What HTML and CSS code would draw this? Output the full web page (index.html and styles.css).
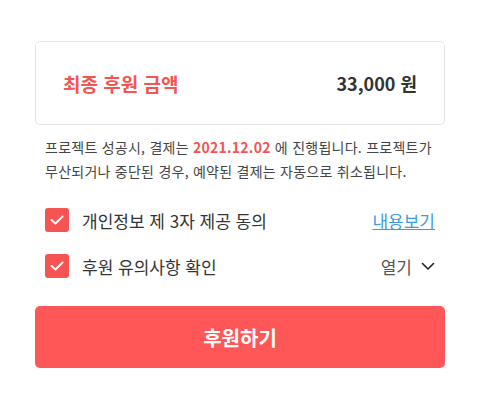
FILE: index.html
```html
<!DOCTYPE html>
<html lang="ko">
<head>
<meta charset="UTF-8" />
<meta name="viewport" content="width=device-width, initial-scale=1" />
<title>후원하기</title>
<link rel="stylesheet" href="styles.css">
</head>
<body>
  <div class="checkout">
    <div class="total-card">
      <span class="total-label">최종 후원 금액</span>
      <span class="total-amount">33,000 원</span>
    </div>

    <p class="notice">
      프로젝트 성공시, 결제는 <strong class="date">2021.12.02</strong> 에 진행됩니다. 프로젝트가<br>
      무산되거나 중단된 경우, 예약된 결제는 자동으로 취소됩니다.
    </p>

    <div class="agree-list">
      <label class="agree-row">
        <span class="check">
          <svg width="14" height="10" viewBox="0 0 14 10"><path d="M1.5 5l4 3.5 7-7" fill="none" stroke="#fff" stroke-width="2" stroke-linecap="round" stroke-linejoin="round"/></svg>
        </span>
        <span class="agree-text">개인정보 제 3자 제공 동의</span>
        <a class="agree-link" href="#">내용보기</a>
      </label>
      <label class="agree-row">
        <span class="check">
          <svg width="14" height="10" viewBox="0 0 14 10"><path d="M1.5 5l4 3.5 7-7" fill="none" stroke="#fff" stroke-width="2" stroke-linecap="round" stroke-linejoin="round"/></svg>
        </span>
        <span class="agree-text">후원 유의사항 확인</span>
        <span class="agree-toggle">열기
          <svg width="14" height="9" viewBox="0 0 14 9"><path d="M1.5 1.5l5.5 5.5 5.5-5.5" fill="none" stroke="#222" stroke-width="1.6" stroke-linecap="round" stroke-linejoin="round"/></svg>
        </span>
      </label>
    </div>

    <button class="submit-btn">후원하기</button>
  </div>
</body>
</html>
```

FILE: styles.css
```css
body {
  margin: 0;
  background: #fff;
  font-family: 'Noto Sans CJK KR', 'Noto Sans', sans-serif;
  color: #333;
}

.checkout {
  width: 410px;
  padding: 41px 0 0 35px;
}

/* Total card */
.total-card {
  display: flex;
  justify-content: space-between;
  align-items: center;
  height: 82px;
  padding: 0 27px;
  border: 1px solid #e4e4e4;
  border-radius: 5px;
}

.total-label {
  font-size: 19px;
  font-weight: 700;
  color: #f45452;
}

.total-amount {
  font-size: 18px;
  font-weight: 700;
  color: #333;
}

/* Notice */
.notice {
  margin: 10px 0 0;
  padding: 0 10px;
  font-size: 14px;
  line-height: 24px;
  letter-spacing: 0.25px;
  color: #444;
  white-space: nowrap;
}

.notice .date {
  color: #f45452;
  font-weight: 700;
}

/* Agreements */
.agree-list {
  display: flex;
  flex-direction: column;
  gap: 22px;
  margin-top: 25px;
  padding: 0 10px;
}

.agree-row {
  display: flex;
  align-items: center;
  height: 24px;
}

.check {
  display: flex;
  align-items: center;
  justify-content: center;
  width: 24px;
  height: 24px;
  border-radius: 3px;
  background: #f55452;
}

.agree-text {
  flex: 1;
  margin-left: 13px;
  font-size: 17px;
  color: #333;
}

.agree-link {
  font-size: 17px;
  color: #3c9be0;
  text-decoration: underline;
}

.agree-toggle {
  display: flex;
  align-items: center;
  gap: 9px;
  font-size: 17px;
  color: #555;
}

/* Submit */
.submit-btn {
  display: block;
  width: 100%;
  height: 62px;
  margin-top: 28px;
  border: none;
  border-radius: 5px;
  background: #ff5757;
  color: #fff;
  font-family: inherit;
  font-size: 20px;
  font-weight: 700;
}
```
